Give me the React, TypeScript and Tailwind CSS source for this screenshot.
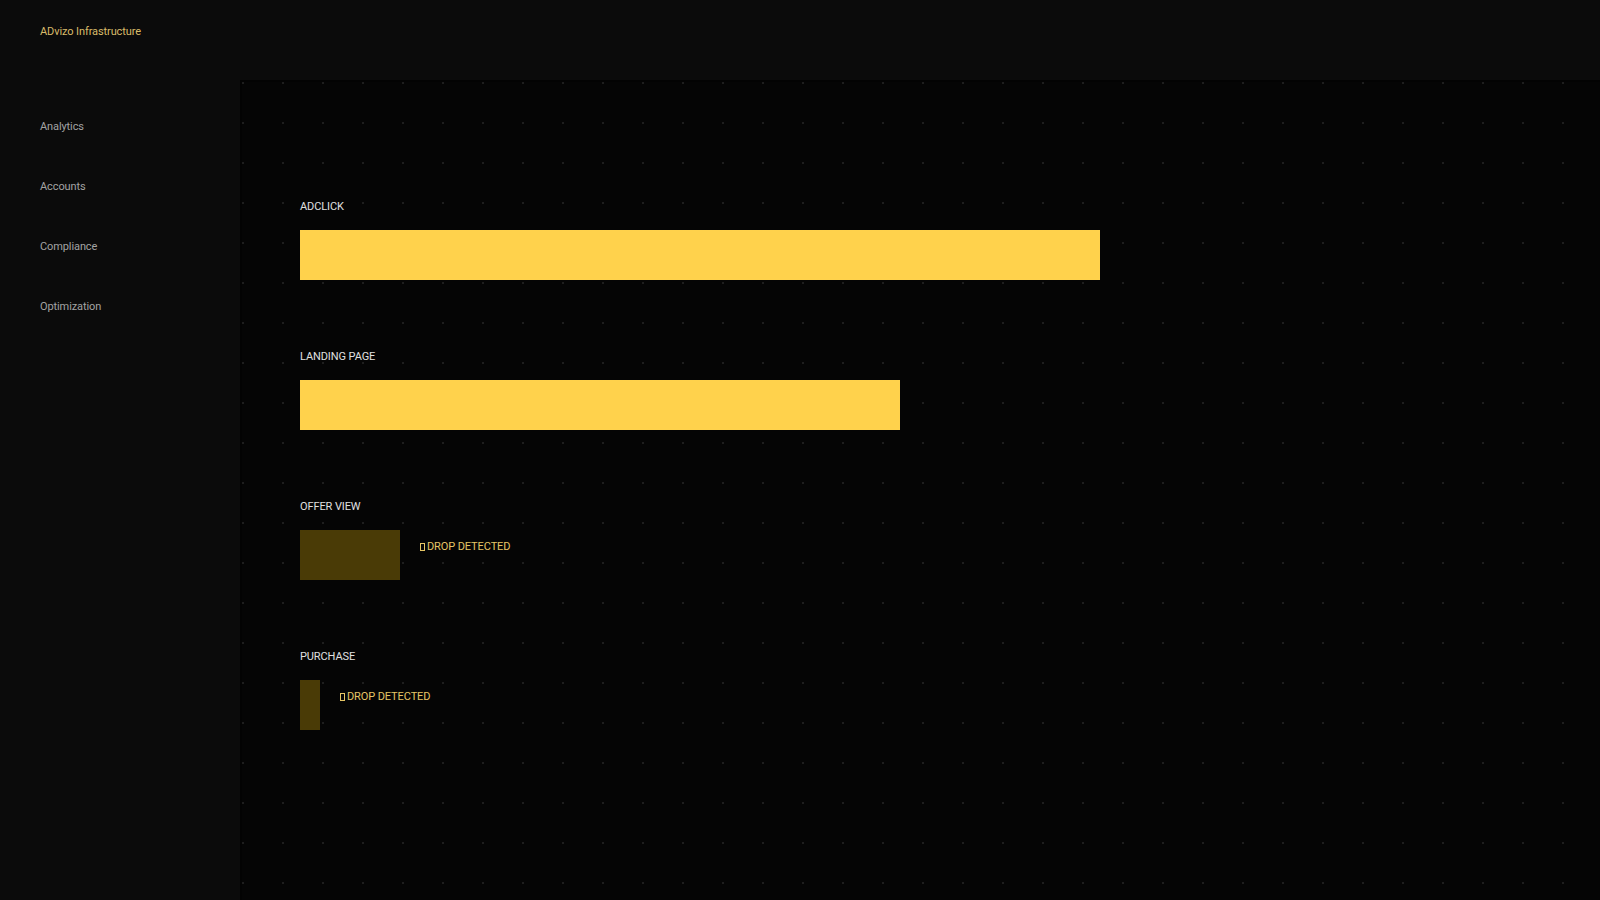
const NAV = ['Analytics', 'Accounts', 'Compliance', 'Optimization'];

const STAGES = [
  { name: 'ADCLICK', width: 800, drop: false },
  { name: 'LANDING PAGE', width: 600, drop: false },
  { name: 'OFFER VIEW', width: 100, drop: true },
  { name: 'PURCHASE', width: 20, drop: true },
];

export default function App() {
  return (
    <div
      className="flex h-screen w-full overflow-hidden bg-[#0b0b0b] text-[11px] tracking-[-0.1px]"
      style={{ fontFamily: "Roboto, 'Liberation Sans', sans-serif" }}
    >
      <aside className="flex w-[240px] shrink-0 flex-col px-10 pt-[24px]">
        <div className="leading-4 text-[#d9bb6a]">ADvizo Infrastructure</div>
        <nav className="mt-[57px] flex flex-col">
          {NAV.map((item) => (
            <div key={item} className="flex h-[60px] items-center leading-4 text-[#a3a3a3]">
              {item}
            </div>
          ))}
        </nav>
      </aside>

      <div className="flex min-w-0 flex-1 flex-col">
        <header className="h-[80px] shrink-0 bg-[#0b0b0b]" />
        <main className="flex-1 border-l-2 border-t-2 border-[#030303] bg-[#050505] bg-[radial-gradient(circle_at_1px_1px,#1e1e1e_1px,transparent_0)] bg-[size:40px_40px] pl-[58px] pt-[117px]">
          {STAGES.map((s) => (
            <section key={s.name} className="mb-[69px]">
              <div className="leading-4 text-[#e0e0e0]">{s.name}</div>
              <div className="mt-[15px] flex items-start gap-5">
                <div
                  className={`h-[50px] ${s.drop ? 'bg-[#4a3b06]' : 'bg-[#ffd24c]'}`}
                  style={{ width: s.width }}
                />
                {s.drop && (
                  <div className="mt-[9px] flex items-center gap-[2px] leading-4 text-[#e5c565]">
                    <span className="inline-block h-[8px] w-[5px] border border-[#e5c565]" aria-hidden />
                    <span>DROP DETECTED</span>
                  </div>
                )}
              </div>
            </section>
          ))}
        </main>
      </div>
    </div>
  );
}
